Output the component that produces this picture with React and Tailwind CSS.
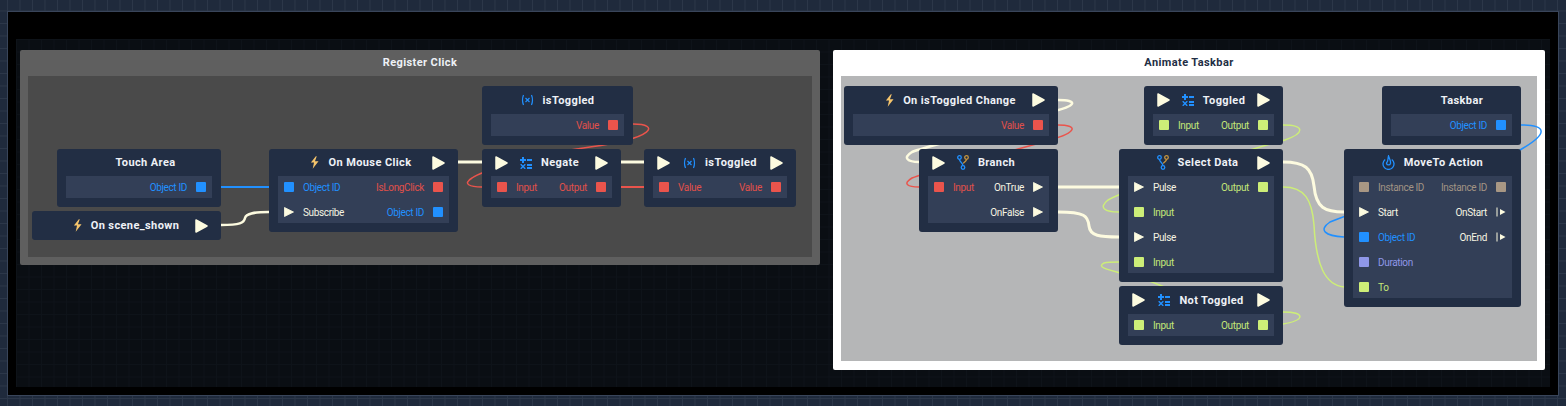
const portColors = {
  blue: 'bg-[#2190ff]',
  red: 'bg-[#ea544c]',
  green: 'bg-[#cdee78]',
  tan: 'bg-[#a89784]',
  purple: 'bg-[#8f97e8]',
}

const labelColors = {
  blue: 'text-[#2190ff]',
  red: 'text-[#e0504a]',
  green: 'text-[#c4e677]',
  tan: 'text-[#a29484]',
  purple: 'text-[#8f97e8]',
  pulse: 'text-[#f6f4e2]',
  event: 'text-[#f6f4e2]',
}

function Bolt() {
  return (
    <svg width="9" height="13" viewBox="0 0 10 14" className="shrink-0">
      <path d="M6.5 0 L1 7 L4.5 7 L3 14 L9.5 5.5 L5.5 5.5 L7.5 0 Z" fill="#f6c56c" />
    </svg>
  )
}

function VarIcon() {
  return (
    <svg width="13" height="12" viewBox="0 0 13 12" fill="none" stroke="#2190ff" strokeWidth="1.2" className="shrink-0">
      <path d="M2.5 1 Q0.5 6 2.5 11" />
      <path d="M10.5 1 Q12.5 6 10.5 11" />
      <path d="M4.5 4 L8.5 8 M8.5 4 L4.5 8" />
    </svg>
  )
}

function MathIcon() {
  return (
    <svg width="12" height="12" viewBox="0 0 12 12" fill="#2190ff" className="shrink-0">
      <rect x="2" y="0" width="2" height="6" />
      <rect x="0" y="2" width="6" height="2" />
      <rect x="7" y="2" width="5" height="2" />
      <rect x="7" y="7" width="5" height="2" />
      <rect x="7" y="10" width="5" height="2" />
      <path d="M0.5 7 L1.5 7 L3 8.5 L4.5 7 L5.5 7 L5.5 8 L4 9.5 L5.5 11 L5.5 12 L4.5 12 L3 10.5 L1.5 12 L0.5 12 L0.5 11 L2 9.5 L0.5 8 Z" />
    </svg>
  )
}

function FlowIcon() {
  return (
    <svg width="12" height="15" viewBox="0 0 12 15" fill="none" strokeWidth="1.3" className="shrink-0">
      <circle cx="2.5" cy="2.5" r="1.8" stroke="#2190ff" />
      <circle cx="6" cy="12.5" r="1.8" stroke="#2190ff" />
      <path d="M2.5 4.3 C2.5 7 5.5 7.5 6 10.7" stroke="#2190ff" />
      <circle cx="9.5" cy="2.5" r="1.8" stroke="#c8963e" />
      <path d="M9.5 4.3 C9.5 6.5 7 7 6.2 8.5" stroke="#c8963e" />
    </svg>
  )
}

function FlameIcon() {
  return (
    <svg width="13" height="15" viewBox="0 0 13 15" fill="none" stroke="#2190ff" strokeWidth="1.3" className="shrink-0">
      <path d="M3.2 4.5 A5.5 5.5 0 1 0 9.8 4.5" />
      <path d="M6.5 1 C7.5 4.5 9 6 8.5 8.5 A2.1 2.1 0 0 1 4.5 8.5 C4.5 7.5 5 7 5.5 6.5 C6 5 6 3 6.5 1 Z" />
    </svg>
  )
}

const icons = { bolt: Bolt, var: VarIcon, math: MathIcon, flow: FlowIcon, flame: FlameIcon }

function HeadPulse() {
  return (
    <svg width="13" height="14" viewBox="0 0 13 14" className="shrink-0">
      <path d="M1 1 L12 7 L1 13 Z" fill="#fdfbe0" stroke="#fdfbe0" strokeWidth="1.5" strokeLinejoin="round" />
    </svg>
  )
}

function Port({ kind }) {
  if (kind === 'pulse') {
    return (
      <svg width="10" height="10" viewBox="0 0 10 10" className="shrink-0">
        <path d="M0.5 0.5 L9.5 5 L0.5 9.5 Z" fill="#fdfbe0" stroke="#fdfbe0" strokeWidth="0.8" strokeLinejoin="round" />
      </svg>
    )
  }
  if (kind === 'event') {
    return (
      <svg width="10" height="10" viewBox="0 0 10 10" className="shrink-0">
        <rect x="0.5" y="0.5" width="1" height="9" fill="#fdfbe0" />
        <path d="M4 2 L9.5 5 L4 8 Z" fill="#fdfbe0" />
      </svg>
    )
  }
  return <span className={`block size-[10px] shrink-0 rounded-[1px] ${portColors[kind]}`} />
}

function Row({ left, right }) {
  return (
    <div className="flex h-[22px] items-center justify-between px-[6px] text-[10px] tracking-[-0.35px]">
      <div className="flex items-center gap-[9px]">
        {left && <Port kind={left[0]} />}
        {left && <span className={labelColors[left[0]]}>{left[1]}</span>}
      </div>
      <div className="flex items-center gap-[9px]">
        {right && <span className={labelColors[right[0]]}>{right[1]}</span>}
        {right && <Port kind={right[0]} />}
      </div>
    </div>
  )
}

function Node({ node }) {
  const Icon = icons[node.icon]
  return (
    <div className={`absolute rounded-[3px] bg-[#222e44] ${node.box}`}>
      <div className={`flex items-center px-[13px] ${node.head || 'h-[27px]'}`}>
        {node.pulseIn && <HeadPulse />}
        <div className={`flex flex-1 items-center justify-center gap-[9px] ${node.shift || ''}`}>
          {Icon && <Icon />}
          <span className="translate-y-px text-[11px] font-bold tracking-[0.4px] whitespace-nowrap text-[#eef1f6]">{node.title}</span>
        </div>
        {node.pulseOut && <HeadPulse />}
      </div>
      {node.rows && (
        <div className="mx-[9px] flex flex-col gap-[3px] bg-[#333f57]">
          {node.rows.map((r, i) => (
            <Row key={i} left={r[0]} right={r[1]} />
          ))}
        </div>
      )}
    </div>
  )
}

const nodes = [
  { title: 'Touch Area', box: 'left-[57px] top-[149px] w-[164px] h-[58px]', shift: 'pl-[13px]', rows: [[null, ['blue', 'Object ID']]] },
  { title: 'On scene_shown', icon: 'bolt', pulseOut: true, head: 'h-[29px]', shift: 'pl-[12px]', box: 'left-[32px] top-[211px] w-[189px] h-[29px]' },
  {
    title: 'On Mouse Click', icon: 'bolt', pulseOut: true, shift: 'pl-[8px]', box: 'left-[269px] top-[149px] w-[189px] h-[83px]',
    rows: [
      [['blue', 'Object ID'], ['red', 'IsLongClick']],
      [['pulse', 'Subscribe'], ['blue', 'Object ID']],
    ],
  },
  { title: 'isToggled', icon: 'var', head: 'h-[28px]', box: 'left-[482px] top-[86px] w-[151px] h-[59px]', rows: [[null, ['red', 'Value']]] },
  { title: 'Negate', icon: 'math', pulseIn: true, pulseOut: true, shift: 'pr-[4px]', box: 'left-[482px] top-[149px] w-[139px] h-[58px]', rows: [[['red', 'Input'], ['red', 'Output']]] },
  { title: 'isToggled', icon: 'var', pulseIn: true, pulseOut: true, box: 'left-[644px] top-[149px] w-[152px] h-[58px]', rows: [[['red', 'Value'], ['red', 'Value']]] },
  { title: 'On isToggled Change', icon: 'bolt', pulseOut: true, head: 'h-[28px]', shift: 'pl-[12px]', box: 'left-[844px] top-[86px] w-[214px] h-[59px]', rows: [[null, ['red', 'Value']]] },
  {
    title: 'Branch', icon: 'flow', pulseIn: true, shift: 'pr-[18px]', box: 'left-[919px] top-[149px] w-[139px] h-[83px]',
    rows: [
      [['red', 'Input'], ['pulse', 'OnTrue']],
      [null, ['pulse', 'OnFalse']],
    ],
  },
  { title: 'Toggled', icon: 'math', pulseIn: true, pulseOut: true, head: 'h-[28px]', box: 'left-[1144px] top-[86px] w-[139px] h-[59px]', rows: [[['green', 'Input'], ['green', 'Output']]] },
  {
    title: 'Select Data', icon: 'flow', pulseOut: true, shift: 'pl-[6px]', box: 'left-[1119px] top-[149px] w-[164px] h-[133px]',
    rows: [
      [['pulse', 'Pulse'], ['green', 'Output']],
      [['green', 'Input'], null],
      [['pulse', 'Pulse'], null],
      [['green', 'Input'], null],
    ],
  },
  { title: 'Not Toggled', icon: 'math', pulseIn: true, pulseOut: true, head: 'h-[28px]', box: 'left-[1119px] top-[286px] w-[164px] h-[59px]', rows: [[['green', 'Input'], ['green', 'Output']]] },
  { title: 'Taskbar', head: 'h-[28px]', box: 'left-[1382px] top-[86px] w-[139px] h-[59px]', shift: 'pl-[21px]', rows: [[null, ['blue', 'Object ID']]] },
  {
    title: 'MoveTo Action', icon: 'flame', box: 'left-[1344px] top-[149px] w-[177px] h-[158px]',
    rows: [
      [['tan', 'Instance ID'], ['tan', 'Instance ID']],
      [['pulse', 'Start'], ['event', 'OnStart']],
      [['blue', 'Object ID'], ['event', 'OnEnd']],
      [['purple', 'Duration'], null],
      [['green', 'To'], null],
    ],
  },
]

const wires = [
  ['#2190ff', 2, 'M221 187 H269'],
  ['#fdfbe0', 2.5, 'M221 225 C240 225 244 223 245 218 C246 213 255 212 269 212'],
  ['#fdfbe0', 3, 'M458 162 H482'],
  ['#fdfbe0', 3, 'M621 162 H644'],
  ['#ea544c', 2, 'M621 187 H644'],
  ['#ea544c', 1.5, 'M633 124 C660 124 656 138 590 147 C530 155 480 172 472 178 C462 184 470 187 482 187'],
  ['#fdfbe0', 2.5, 'M1058 100 C1078 100 1078 106 1050 112 C1000 130 925 146 912 152 C902 158 908 162 919 162'],
  ['#ea544c', 1.5, 'M1058 125 C1078 125 1078 132 1050 140 C1000 155 925 172 912 178 C902 184 908 187 919 187'],
  ['#fdfbe0', 3, 'M1058 187 H1119'],
  ['#fdfbe0', 3, 'M1058 212 C1085 212 1088 216 1089 226 C1090 236 1100 237 1119 237'],
  ['#cdee78', 1.5, 'M1283 125 C1305 125 1305 133 1285 140 C1240 152 1125 190 1108 200 C1098 208 1105 212 1119 212'],
  ['#cdee78', 1.5, 'M1283 312 C1305 312 1306 320 1283 324 C1240 326 1180 290 1140 278 C1110 270 1095 268 1104 263 C1108 262 1112 262 1119 262'],
  ['#fdfbe0', 3, 'M1283 162 C1305 162 1312 168 1314 186 C1316 208 1325 212 1344 212'],
  ['#cdee78', 1.5, 'M1283 187 C1305 187 1312 200 1314 225 C1316 265 1325 285 1344 287'],
  ['#2190ff', 1.5, 'M1521 125 C1548 125 1548 134 1520 150 C1480 170 1345 215 1330 222 C1318 230 1325 236 1344 237'],
]

export default function App() {
  return (
    <div className="relative h-[406px] w-[1566px] overflow-hidden bg-[#1f2a3c] bg-[linear-gradient(#2c3749_1px,transparent_1px),linear-gradient(90deg,#2c3749_1px,transparent_1px)] bg-[size:12.5px_12.5px] bg-[position:7px_-2px] pt-[11px] pl-[7px] font-['Roboto',sans-serif]">
      <div className="h-[385px] w-[1552px] border border-[#39455a] bg-black pt-[27px] pr-[8px] pb-[8px] pl-[8px]">
        <div className="flex h-[348px] items-start gap-[13px] bg-[#0a0e13] bg-[linear-gradient(#0e1319_1px,transparent_1px),linear-gradient(90deg,#0e1319_1px,transparent_1px)] bg-[size:12.5px_12.5px] pt-[11px] pl-[4px]">
          <section className="flex h-[215px] w-[800px] flex-col rounded-[2px] bg-[#5f5f5f] px-[8px] pb-[8px]">
            <h2 className="flex h-[26px] items-center justify-center text-[11px] font-bold tracking-[0.4px] text-[#eef1f6]">Register Click</h2>
            <div className="flex-1 bg-[#4a4a4a]" />
          </section>
          <section className="flex h-[320px] w-[712px] flex-col rounded-[2px] bg-white px-[8px] pb-[9px]">
            <h2 className="flex h-[26px] items-center justify-center text-[11px] font-bold tracking-[0.4px] text-[#222e44]">Animate Taskbar</h2>
            <div className="flex-1 bg-[#b5b6b7]" />
          </section>
        </div>
      </div>

      <svg width="1566" height="406" viewBox="0 0 1566 406" fill="none" className="absolute top-0 left-0">
        {wires.map(([color, w, d], i) => (
          <path key={i} d={d} stroke={color} strokeWidth={w} />
        ))}
      </svg>

      {nodes.map((n, i) => (
        <Node key={i} node={n} />
      ))}
    </div>
  )
}
